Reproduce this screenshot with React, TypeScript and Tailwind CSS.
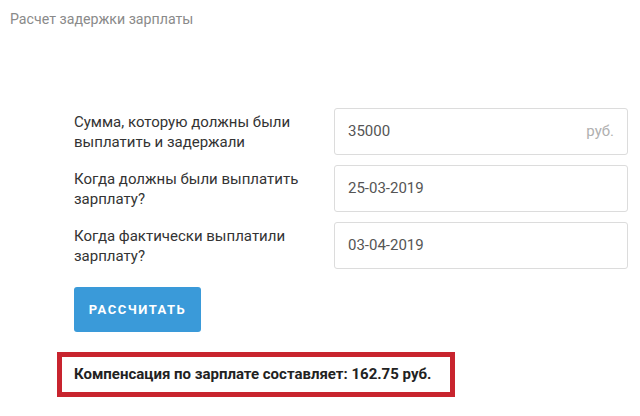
const rows = [
  { label: "Сумма, которую должны были выплатить и задержали", value: "35000", suffix: "руб." },
  { label: "Когда должны были выплатить зарплату?", value: "25-03-2019" },
  { label: "Когда фактически выплатили зарплату?", value: "03-04-2019" },
];

export default function App() {
  return (
    <div className="w-[640px] h-[416px] bg-white font-['Roboto',sans-serif] overflow-hidden">
      <div className="pl-[10px] pt-[9px] text-[14.2px] leading-[20px] text-[#8a8a8a]">Расчет задержки зарплаты</div>
      <div className="pl-[57px] pt-[79px]">
        <div className="ml-[17px] flex flex-col gap-[10px]">
          {rows.map((r) => (
            <div key={r.value} className="flex items-center h-[47px]">
              <div className="w-[260px] pr-[30px] text-[15px] leading-[20px] text-[#333]">{r.label}</div>
              <div className="w-[294px] h-[47px] border border-[#dcdcdc] rounded-[3px] flex items-center justify-between px-[13px] text-[15px] text-[#555]">
                <span>{r.value}</span>
                {r.suffix && <span className="text-[#b0b0b0]">{r.suffix}</span>}
              </div>
            </div>
          ))}
        </div>
        <button className="ml-[17px] mt-[18px] w-[127px] h-[45px] rounded-[3px] bg-[#3a9ad9] text-white text-[13px] font-bold tracking-[1.5px]">
          РАССЧИТАТЬ
        </button>
        <div className="mt-[20px] w-[398px] h-[45px] border-[5px] border-[#c8242e] flex items-center pl-[12px] text-[15px] font-bold text-[#222]">
          Компенсация по зарплате составляет: 162.75 руб.
        </div>
      </div>
    </div>
  );
}
